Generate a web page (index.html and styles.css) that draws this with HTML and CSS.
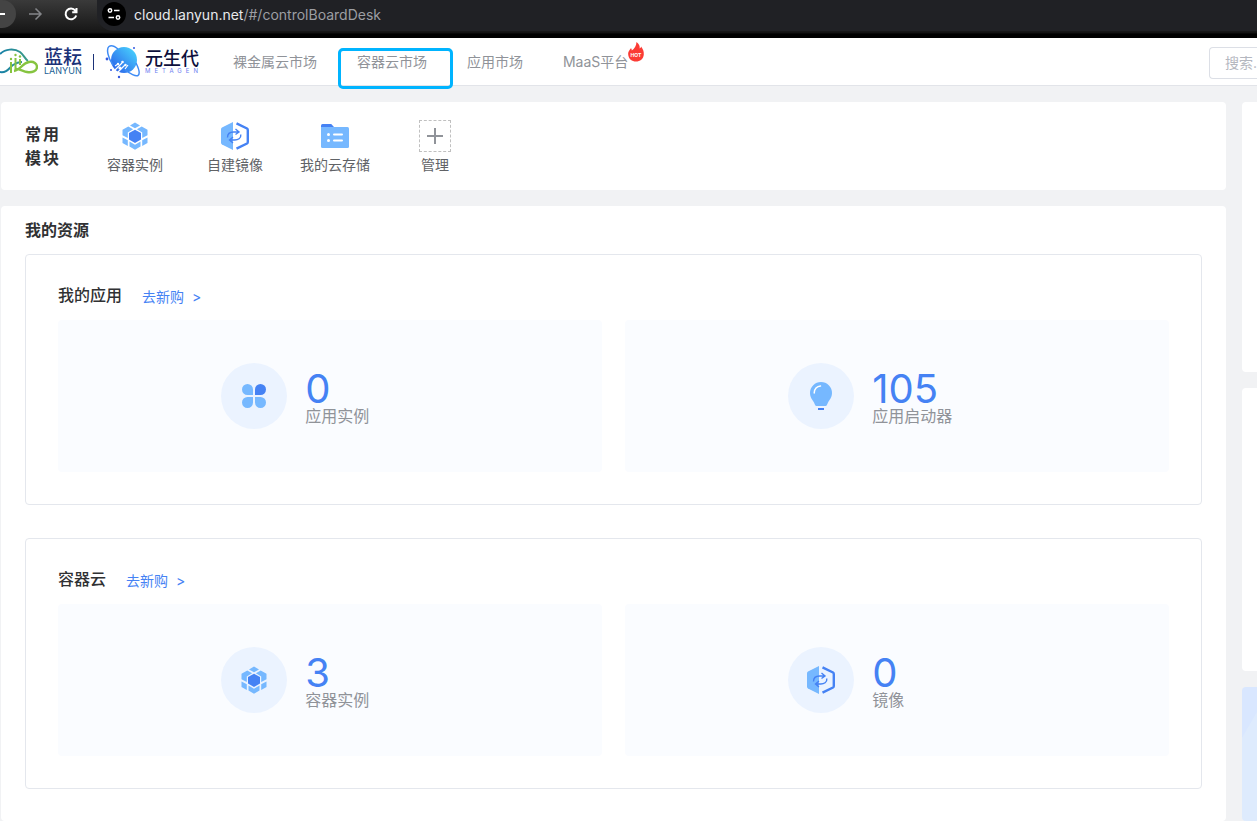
FILE: index.html
```html
<!DOCTYPE html>
<html lang="zh-CN">
<head>
  <meta charset="UTF-8">
  <meta name="viewport" content="width=device-width, initial-scale=1.0">
  <title>元生代</title>
  <link rel="stylesheet" href="styles.css">
</head>
<body>

<!-- 图标 -->
<svg class="sprite" aria-hidden="true">
  <symbol id="i-container" viewBox="0 0 32 32">
    <path fill="#76b8ff" d="M16 2.500l5 2.900-5 2.900-5-2.900zM9.300 6.500l4.800 2.800-5.300 3.200v5.400L3.500 15.200V9.800zM22.700 6.500l5.800 3.300v5.400l-5.300 2.700v-5.400l-5.300-3.200zM3.500 17.500l5.300 2.700V26l-5.300-3zM28.500 17.500l-5.300 2.700V26l5.300-3zM10.500 21.500l5.500 3.200 5.500-3.200v4.900L16 29.800l-5.500-3.400z"/>
    <path fill="#4582f4" d="M16 9.800l6 3.200v6.500L16 22.900l-6-3.400V13z"/>
  </symbol>
  <symbol id="i-image" viewBox="0 0 32 32">
    <path fill="#76b8ff" d="M14 2v28L3 24.500Q2 23.900 2 22.800V9.200Q2 8.100 3 7.500z"/>
    <path fill="none" stroke="#4582f4" stroke-width="2.400" d="M17.500 3.300l10.500 5.200Q28.800 9 28.800 10v12q0 1-.8 1.500l-10.500 5.200"/>
    <path fill="none" stroke="#4582f4" stroke-width="1.400" d="M8.500 17.500c0-4 3-5.500 6-5.500h5M16.500 9l3.500 3-3.500 2.500M21.800 14.500c.5 4-3 5.500-6 5.500h-5M14 17l-3.500 3 3.500 3"/>
  </symbol>
  <symbol id="i-folder" viewBox="0 0 32 32">
    <path fill="#4582f4" d="M2 9V5.500Q2 4 3.500 4h8.700l3.300 3.500V9z"/>
    <path fill="#76b8ff" d="M2 7h26.500Q30 7 30 8.500v18q0 1.500-1.500 1.500h-25Q2 28 2 26.500z"/>
    <path stroke="#fff" stroke-width="2" stroke-linecap="round" d="M15 14.500h8M15 20.500h8"/>
    <circle fill="#fff" cx="9.500" cy="14.500" r="1.500"/><circle fill="#fff" cx="9.500" cy="20.500" r="1.500"/>
  </symbol>
  <symbol id="i-apps" viewBox="0 0 32 32">
    <path fill="#76b8ff" d="M9.500 4a5.500 5.500 0 0 1 5.500 5.500V15H9.500a5.500 5.500 0 0 1 0-11zM9.500 17H15v5.500A5.500 5.500 0 1 1 9.500 17zM17 17h5.500a5.500 5.500 0 1 1-5.500 5.500z"/>
    <path fill="#4582f4" d="M17 15V9.500a5.500 5.500 0 1 1 5.500 5.500z"/>
  </symbol>
  <symbol id="i-bulb" viewBox="0 0 32 32">
    <path fill="#76b8ff" d="M16 2a11 11 0 0 1 11 11c0 4.500-2.500 6.800-4 9.500-.8 1.500-1 3.500-2.500 3.500h-9c-1.500 0-1.700-2-2.500-3.500C7.500 19.800 5 17.500 5 13A11 11 0 0 1 16 2z"/>
    <path fill="none" stroke="#fff" stroke-width="1.500" stroke-linecap="round" d="M9.200 13c0-4 2.800-6.800 6.300-7"/>
    <path fill="#4582f4" d="M13 28h6v2h-6z"/>
  </symbol>
</svg>

<div class="browser">
  <button class="back" aria-label="后退"><svg viewBox="0 0 16 16"><path d="M1 8h14M7 2L1 8l6 6"/></svg></button>
  <button class="forward" aria-label="前进"><svg viewBox="0 0 16 16"><path d="M2 8h12M8.500 2.500L14 8l-5.500 5.500"/></svg></button>
  <button class="reload" aria-label="刷新"><svg viewBox="0 0 16 16"><path d="M13.200 9.500A5.400 5.400 0 1 1 12.300 4.600L13.500 6M13.500 2v4.300H9.200"/></svg></button>
  <div class="address">
    <button class="site-info" aria-label="网站信息">
      <svg viewBox="0 0 16 16"><circle cx="4" cy="4.500" r="1.700"/><path d="M8 4.500h5.500M2.500 11.500H8"/><circle cx="12" cy="11.500" r="1.700"/></svg>
    </button>
    <span class="url"><b>cloud.lanyun.net</b>/#/controlBoardDesk</span>
  </div>
</div>

<header class="header">
  <a class="logo" href="#">
    <svg class="logo-cloud" viewBox="0 0 38 32">
      <defs>
        <linearGradient id="g-cloud"><stop offset="0" stop-color="#1680a8"/><stop offset="1" stop-color="#3c9c86"/></linearGradient>
      </defs>
      <path fill="none" stroke="url(#g-cloud)" stroke-width="2" d="M0 8C5 3 14 2 20 6c4 3 5 7 8 9M0 26c7 1 9-4 13-7 3-2 6-3 9-3"/>
      <path fill="none" stroke="#86c440" stroke-width="2.400" d="M14 25c7-1 8-8 15-9 5-1 8 2 8 5 0 4-5 6-10 5-4-.8-7-3-11-3"/>
      <path stroke="#86c440" stroke-width="2" d="M11 16v11M15.500 12v12M20 13v6"/>
      <circle fill="#86c440" cx="11" cy="13" r="1.200"/><circle fill="#86c440" cx="15.500" cy="9" r="1.200"/><circle fill="#86c440" cx="20" cy="10.500" r="1.200"/>
    </svg>
    <span class="logo-text">
      <span class="lanyun-cn">蓝耘</span>
      <span class="lanyun-en">LANYUN</span>
    </span>
  </a>
  <a class="logo metagen" href="#">
    <svg class="logo-planet" viewBox="0 0 36 36">
      <defs>
        <linearGradient id="g-planet" x1="1" y1="0" x2="0" y2="1"><stop offset="0" stop-color="#4bdcff"/><stop offset="1" stop-color="#2857e8"/></linearGradient>
      </defs>
      <circle fill="url(#g-planet)" cx="19" cy="16" r="13"/>
      <path fill="none" stroke="#3f8cf5" stroke-width="1.500" d="M8 21C3 14 1 5 4 2.500c2-1.500 6 0 9 2.500M31 19c3 6 4 11 2 12.500-2 1.300-8-1.500-13-6"/>
      <path fill="none" stroke="#fff" stroke-width="1.200" d="M10 26l7-7M13 28l7-7M13 20l-3 2M20 25l3-4"/>
      <g fill="#fff"><circle cx="17.500" cy="18" r="1.300"/><circle cx="20.500" cy="21" r="1.200"/><circle cx="13" cy="20" r="1.200"/><circle cx="15" cy="24" r="1.600"/></g>
      <g fill="#3459df"><circle cx="2" cy="15" r="1.400"/><circle cx="6" cy="26" r="1"/><circle cx="14" cy="33" r="1.200"/><circle cx="29" cy="4" r="1"/></g>
    </svg>
    <span class="logo-text">
      <span class="metagen-cn">元生代</span>
      <span class="metagen-en">METAGEN</span>
    </span>
  </a>
  <nav class="nav">
    <a href="#">裸金属云市场</a>
    <a href="#" class="marked">容器云市场</a>
    <a href="#">应用市场</a>
    <a href="#" class="hot">MaaS平台
      <svg viewBox="0 0 16 20"><path fill="#fb3b35" d="M8.500 0c2.500 2 3.500 4 3.200 6.500.8-.5 1.200-1 1.400-2C15 7 16 9.500 15.800 12.500 15.500 17 12 19.500 8 19.500S.5 17 .2 12.500C0 9 2 8 3 6c.6.800.8 1.500.8 2.500C6.500 6.500 8.300 4 8.500 0z"/><text x="8" y="14.500">HOT</text></svg>
    </a>
  </nav>
  <input class="search" type="text" placeholder="搜索..." aria-label="搜索">
</header>

<div class="page">
  <main class="main">
    <section class="card quick">
      <h2>常用<br>模块</h2>
      <a href="#"><svg><use href="#i-container"/></svg>容器实例</a>
      <a href="#"><svg><use href="#i-image"/></svg>自建镜像</a>
      <a href="#"><svg><use href="#i-folder"/></svg>我的云存储</a>
      <a href="#"><span class="plus"></span>管理</a>
    </section>

    <section class="card resources">
      <h2>我的资源</h2>

      <div class="group">
        <div class="group-head">
          <h3>我的应用</h3>
          <a href="#">去新购&nbsp; &gt;</a>
        </div>
        <div class="tiles">
          <div class="tile">
            <span class="circle"><svg><use href="#i-apps"/></svg></span>
            <p><strong>0</strong>应用实例</p>
          </div>
          <div class="tile">
            <span class="circle"><svg><use href="#i-bulb"/></svg></span>
            <p><strong>105</strong>应用启动器</p>
          </div>
        </div>
      </div>

      <div class="group">
        <div class="group-head">
          <h3>容器云</h3>
          <a href="#">去新购&nbsp; &gt;</a>
        </div>
        <div class="tiles">
          <div class="tile">
            <span class="circle"><svg><use href="#i-container"/></svg></span>
            <p><strong>3</strong>容器实例</p>
          </div>
          <div class="tile">
            <span class="circle"><svg><use href="#i-image"/></svg></span>
            <p><strong>0</strong>镜像</p>
          </div>
        </div>
      </div>
    </section>
  </main>

  <aside class="side">
    <div class="card side-user"></div>
    <div class="card side-bill"></div>
    <div class="card side-promo"></div>
  </aside>
</div>

</body>
</html>
```
FILE: styles.css
```css
* { box-sizing: border-box; }

body {
  margin: 0;
  min-height: 100vh;
  display: flex;
  flex-direction: column;
  background: #f1f2f4;
  color: #303133;
  font-family: Inter, "Noto Sans CJK SC", sans-serif;
  font-size: 14px;
}

a { color: inherit; text-decoration: none; }

h2, h3, p { margin: 0; }

h2, h3 {
  font-size: 16px;
  line-height: 24px;
}

button {
  padding: 0;
  border: none;
  background: none;
}

.sprite {
  position: absolute;
  width: 0;
  height: 0;
}

/* 浏览器栏 */
.browser {
  flex: none;
  display: flex;
  height: 38px;
  background: linear-gradient(#3a3a3a, #161616 85%, #000 90%);
}

.browser button {
  flex: none;
  display: flex;
  align-items: center;
  justify-content: center;
  height: 28px;
}

.browser svg {
  width: 16px;
  height: 16px;
  fill: none;
  stroke: #fff;
  stroke-width: 2;
}

.browser .back {
  width: 16px;
  justify-content: flex-end;
  padding-right: 10px;
  background: #444;
  border-radius: 0 14px 14px 0;
  overflow: hidden;
}

.browser .back svg { flex: none; }

.browser .forward { width: 38px; }
.browser .forward svg { stroke: #85868a; stroke-width: 1.500; }
.browser .reload { width: 34px; margin-right: 9px; }

.address {
  flex: 1;
  display: flex;
  align-items: center;
  gap: 8px;
  height: 31px;
  padding: 0 0 3px 5px;
  background: #202125;
  border-radius: 0 0 0 16px;
}

.browser .site-info {
  width: 24px;
  height: 24px;
  background: #000;
  border-radius: 50%;
}

.browser .site-info svg { stroke-width: 1.500; }

.url { color: #9c9ea3; }
.url b { color: #e8eaed; font-weight: 400; }

/* 顶部导航 */
.header {
  flex: none;
  display: flex;
  align-items: center;
  height: 48px;
  background: #fff;
  border-bottom: 1px solid #e2e4e9;
}

.logo {
  flex: none;
  display: flex;
  align-items: center;
  gap: 6px;
}

.logo-cloud { width: 38px; height: 32px; }
.logo-planet { width: 36px; height: 36px; }

.logo-text {
  display: flex;
  flex-direction: column;
}

.lanyun-cn {
  color: #1b3278;
  font-size: 19px;
  font-weight: 500;
  line-height: 19px;
}

.lanyun-en {
  color: #1b5f94;
  font-size: 9px;
  line-height: 8px;
}

.metagen {
  gap: 4px;
  margin-left: 11px;
  padding-left: 12px;
  background: linear-gradient(#1b3278, #1b3278) left / 1px 16px no-repeat;
}

.metagen-cn {
  color: #0d0f3c;
  font-size: 18px;
  font-weight: 500;
  line-height: 19px;
}

.metagen-en {
  color: #6d7df0;
  font-size: 6px;
  letter-spacing: 4px;
  line-height: 6px;
}

.nav {
  display: flex;
  gap: 40px;
  margin-left: 31px;
  color: #909399;
  line-height: 20px;
}

.nav a { position: relative; white-space: nowrap; }

.marked::after {
  content: "";
  position: absolute;
  inset: -4px -26px -17px -19px;
  border: 3px solid #00b4ff;
  border-radius: 5px;
}

.hot svg {
  position: absolute;
  top: -10px;
  left: 100%;
  width: 16px;
  height: 20px;
}

.hot text {
  fill: #fff;
  font-size: 5px;
  font-weight: 700;
  text-anchor: middle;
}

.search {
  flex: none;
  width: 48px;
  height: 32px;
  margin: 2px 0 0 auto;
  padding: 0 0 0 15px;
  border: 1px solid #dcdfe6;
  border-right: none;
  border-radius: 4px 0 0 4px;
  font: inherit;
}

.search::placeholder { color: #b4b7bf; }

/* 内容 */
.page {
  flex: 1;
  display: flex;
  gap: 16px;
  padding: 16px 0 0 1px;
}

.main {
  flex: 1;
  display: flex;
  flex-direction: column;
  gap: 16px;
}

.card {
  background: #fff;
  border-radius: 4px;
}

.quick {
  display: flex;
  padding: 16px 24px;
}

.quick h2 {
  width: 60px;
  padding-top: 4px;
  letter-spacing: 2px;
}

.quick a {
  display: flex;
  flex-direction: column;
  align-items: center;
  width: 100px;
  gap: 4px;
  padding-top: 2px;
  color: #606266;
  line-height: 18px;
}

.quick a:hover { color: #4582f4; }

.quick svg { width: 32px; height: 32px; }

.plus {
  width: 32px;
  height: 32px;
  border: 1px dashed #c0c0c0;
  background:
    linear-gradient(#909399, #909399) center / 16px 2px no-repeat,
    linear-gradient(#909399, #909399) center / 2px 16px no-repeat;
}

.resources {
  flex: 1;
  padding: 12px 24px;
}

.group {
  margin-top: 12px;
  padding: 28px 32px 32px;
  border: 1px solid #e4e7ed;
  border-radius: 4px;
}

.group + .group { margin-top: 33px; }

.group-head {
  display: flex;
  gap: 20px;
  margin-bottom: 11px;
}

.group-head h3 { font-weight: 500; }

.group-head a {
  padding-top: 2px;
  color: #4582f4;
  line-height: 24px;
}

.tiles {
  display: grid;
  grid-template-columns: 1fr 1fr;
  gap: 23px;
}

.tile {
  display: flex;
  align-items: center;
  gap: 18px;
  height: 152px;
  padding-left: 30%;
  background: #fafcff;
  border-radius: 4px;
}

.circle {
  display: flex;
  align-items: center;
  justify-content: center;
  width: 66px;
  height: 66px;
  background: #ebf3ff;
  border-radius: 50%;
}

.circle svg { width: 32px; height: 32px; }

.tile p {
  padding-top: 7px;
  color: #909399;
  font-size: 16px;
  line-height: 22px;
}

.tile strong {
  display: block;
  color: #4582f4;
  font-size: 40px;
  font-weight: 400;
  line-height: 32px;
}

/* 右侧栏 */
.side {
  flex: 0 0 15px;
  display: flex;
  flex-direction: column;
  gap: 16px;
}

.side .card { border-radius: 4px 0 0 4px; }

.side-user { height: 270px; }
.side-bill { height: 283px; }

.side .side-promo {
  flex: 1;
  background: linear-gradient(120deg, #d9e7ff 25px, #deebfd 26px);
}
```
